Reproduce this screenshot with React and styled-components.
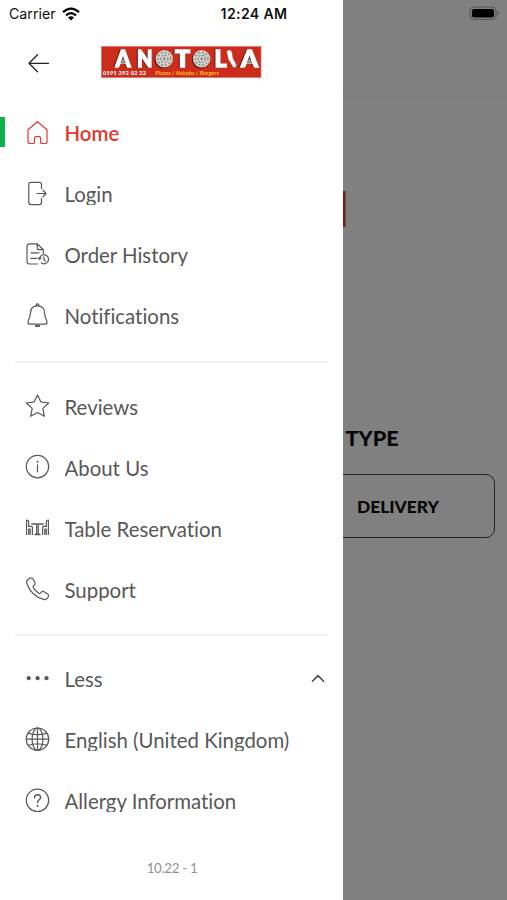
import React from "react";
import styled, { createGlobalStyle } from "styled-components";

const GlobalStyle = createGlobalStyle`
  * { box-sizing: border-box; }
  body { margin: 0; background: #808080; font-family: Lato, "Liberation Sans", sans-serif; }
`;

const Screen = styled.div`
  position: relative;
  display: grid;
  grid-template-columns: 343px 1fr;
  height: 900px;
  overflow: hidden;
`;

const StatusBar = styled.div`
  position: absolute;
  inset: 0 0 auto 0;
  height: 27px;
  display: grid;
  grid-template-columns: 1fr auto 1fr;
  align-items: center;
  padding: 0 8px 0 9px;
  font-family: Inter, sans-serif;
  color: #111;
`;
const Carrier = styled.div`
  display: flex;
  align-items: center;
  gap: 6px;
  font-size: 14.2px;
`;
const Clock = styled.div`
  font-size: 14.1px;
  font-weight: 600;
  letter-spacing: 0.35px;
`;
const Battery = styled.svg`
  justify-self: end;
  margin-right: -1px;
`;

const Drawer = styled.nav`
  display: flex;
  flex-direction: column;
  background: #fff;
`;
const DrawerHeader = styled.header`
  display: flex;
  align-items: flex-start;
  height: 102px;
  padding: 46px 0 0 27px;
`;
const BackIcon = styled.svg`
  margin-top: 6px;
`;
const Logo = styled.svg`
  margin-left: 50px;
`;
const LogoLetters = styled.g`
  font-family: Lato, sans-serif;
  font-weight: 900;
  font-size: 23.5px;
  fill: #fff;
  stroke: #fff;
  stroke-width: 1.5px;
  filter: drop-shadow(-1px 0.8px 0 #56170f);
`;

const Item = styled.a`
  position: relative;
  display: flex;
  align-items: center;
  height: 61px;
  padding: 0 17px 0 25px;
  color: ${(p) => (p.$active ? "#e5382c" : "#585858")};
  &::before {
    content: "";
    display: ${(p) => (p.$active ? "block" : "none")};
    position: absolute;
    left: 0;
    top: 15px;
    width: 4.5px;
    height: 30px;
    background: #0bb14b;
  }
`;
const Icon = styled.svg`
  flex: none;
  width: 25px;
  height: 26px;
  fill: none;
  stroke: currentColor;
  stroke-width: 1.2;
  stroke-linecap: round;
  stroke-linejoin: round;
`;
const Label = styled.span`
  flex: 1;
  height: 21px;
  margin-left: 14.5px;
  margin-top: 2px;
  overflow: hidden;
  font-size: 20.4px;
  line-height: 20px;
  font-weight: ${(p) => (p.$active ? 600 : 400)};
  font-variant-ligatures: none;
  white-space: nowrap;
`;
const Divider = styled.hr`
  flex: none;
  width: 313px;
  height: 2px;
  margin: ${(p) => p.$above} 0 ${(p) => p.$below} 15px;
  border: 0;
  background: #f3f3f3;
`;
const Version = styled.div`
  margin-top: 28px;
  padding-left: 1px;
  text-align: center;
  font-size: 13.3px;
  line-height: 18px;
  letter-spacing: -0.3px;
  color: #929292;
`;

const Page = styled.main`
  display: flex;
  flex-direction: column;
  min-width: 0;
  overflow: hidden;
  background: #808080;
  color: #060606;
`;
const PageHeader = styled.div`
  flex: none;
  height: 97px;
  border-bottom: 4px solid #7d7d7d;
`;
const BannerEdge = styled.div`
  flex: none;
  width: 3px;
  height: 36px;
  margin-top: 94px;
  background: #7b1a10;
  border-right: 1px solid #75534f;
`;
const Heading = styled.h2`
  margin: 197px 0 0 2.5px;
  font-size: 21.6px;
  font-weight: 900;
  line-height: 28px;
`;
const DeliveryButton = styled.button`
  flex: none;
  width: 170px;
  height: 64px;
  margin: 22px 0 0 -18px;
  padding: 1px 0 0 31px;
  border: 1.5px solid #242424;
  border-radius: 9px;
  background: transparent;
  color: inherit;
  font: 900 17.4px/24px Lato, sans-serif;
  text-align: left;
`;

const icons = {
  home: <path d="M3 9.7 12.5 1.7 22 9.7V21.5Q22 23.5 20 23.5H16.6Q15.6 23.5 15.6 22.5V18.5Q15.6 16.7 14 16.7H11.2Q9.5 16.7 9.5 18.5V22.5Q9.5 23.5 8.5 23.5H5Q3 23.5 3 21.5Z" />,
  login: <path d="M16.5 7.5V3.4Q16.5 1.4 14.3 1.4H6Q3.8 1.4 3.8 3.4V21.6Q3.8 23.6 6 23.6H14.3Q16.5 23.6 16.5 21.6V17.5M12 12.5H21M17.8 9.2 21 12.5 17.8 15.8" />,
  history: (
    <>
      <path d="M12.5 22H4.5Q2 22 2 19.5V4.3Q2 1.8 4.5 1.8H12.2L18.3 7.7V11.4M12.2 1.8V5.7Q12.2 7.7 14.2 7.7H18.3M6 10.8H14M6 16.4H11.5" />
      <path d="M14.5 17.3A4.5 4.5 0 1 1 16.2 20.8M14.5 17.3 13.4 16M14.5 17.3 15.9 16.2" />
      <path d="M18.9 14.9V17.5L20.5 19.1" />
    </>
  ),
  bell: (
    <>
      <path d="M12.5 2.9C7.2 2.9 5.4 6.4 5.4 10.5 5.4 14.7 3 16.8 3 19.2Q3 21.2 5.2 21.2H19.8Q22 21.2 22 19.2C22 16.8 19.6 14.7 19.6 10.5 19.6 6.4 17.8 2.9 12.5 2.9ZM11 3Q11 0.8 12.5 0.8T14 3" />
      <path d="M10.8 23H14.2" strokeWidth="2" />
    </>
  ),
  star: <path d="M12.5 2 15.8 8.8 23.7 10 17.8 15.4 19.4 23.3 12.5 19.5 5.6 23.3 7.2 15.4 1.3 10 9.2 8.8Z" />,
  info: (
    <>
      <circle cx="12.5" cy="12.6" r="11.2" />
      <path d="M12.5 10.8V17.8" />
      <path d="M12.5 7.6V7.9" strokeWidth="1.7" />
    </>
  ),
  table: (
    <>
      <path d="M1.6 5V19.5M1.6 5Q3.7 5 3.7 7V11.4H6.6Q7.4 11.4 7.4 12.4V19.5M3.7 14.2H5.2V19.5M3.7 14.2V19.5M23.4 5V19.5M23.4 5Q21.3 5 21.3 7V11.4H18.4Q17.6 11.4 17.6 12.4V19.5M21.3 14.2H19.8V19.5M21.3 14.2V19.5" strokeWidth="1.2" />
      <path d="M7 9H18M10.2 19.3H14.8" strokeWidth="1.7" />
      <path d="M11.7 10V19M13.3 10V19" strokeWidth="1.2" />
    </>
  ),
  phone: <path d="M2.6 3.8 4.6 2.2Q6.6 1 8.1 3.1L9.8 6.2Q10.6 8 9.2 9.2L8.4 9.9Q7.7 10.7 8.3 11.6 10.5 15 13.8 17.3 14.7 18 15.5 17.1L16.3 16.2Q17.4 15 19.1 15.8L22.3 17.7Q24.4 19.1 23.1 21L21.6 22.9Q20.7 23.9 18.7 23.4 6.4 20.3 1.8 7.2 1.1 5.1 2.6 3.8Z" />,
  dots: (
    <g fill="currentColor" stroke="none">
      <circle cx="3.7" cy="12.2" r="2.1" />
      <circle cx="12.6" cy="12.2" r="2.1" />
      <circle cx="21.5" cy="12.2" r="2.1" />
    </g>
  ),
  globe: (
    <>
      <circle cx="12.5" cy="12.2" r="11.2" />
      <ellipse cx="12.5" cy="12.2" rx="5.4" ry="11.2" />
      <path d="M12.5 1V23.4M1.3 12.2H23.7M3.3 6.1Q12.5 9.2 21.7 6.1M3.3 18.3Q12.5 15.2 21.7 18.3" />
    </>
  ),
  help: (
    <>
      <circle cx="12.5" cy="12.3" r="11.2" />
      <path d="M9.5 9.7Q9.5 6.7 12.6 6.7T15.6 9.5C15.6 11.8 12.6 11.8 12.6 14.5" strokeWidth="1.4" />
      <path d="M12.6 17.7V17.9" strokeWidth="1.9" />
    </>
  ),
};

function MenuItem({ icon, children, active, trailing }) {
  return (
    <Item $active={active}>
      <Icon viewBox="0 0 25 26">{icons[icon]}</Icon>
      <Label $active={active}>{children}</Label>
      {trailing}
    </Item>
  );
}

function Pizza({ cx }) {
  return (
    <g>
      <circle cx={cx - 0.8} cy="13.6" r="9" fill="#57190f" />
      <circle cx={cx} cy="12.8" r="8.7" fill="#d5d1ca" />
      <circle cx={cx} cy="12.8" r="6.4" fill="none" stroke="#858585" strokeWidth="1.5" strokeDasharray="1.7 2" />
      <circle cx={cx} cy="12.8" r="3.6" fill="none" stroke="#8b8b88" strokeWidth="1.4" strokeDasharray="2 1.4" />
      <circle cx={cx} cy="12.8" r="1" fill="#555" />
    </g>
  );
}

const letters = [["A", 14.5, 15], ["N", 36, 15.5], ["T", 74, 15], ["L", 113.5, 12], ["A", 140, 17]];

function AnotoliaLogo() {
  return (
    <Logo width="161" height="32" viewBox="0 0 161 32">
      <rect x="0.5" y="0.5" width="159.5" height="31" fill="#cb2c1b" stroke="#dc7467" strokeWidth="0.7" />
      <LogoLetters>
        {letters.map(([ch, x, w], i) => (
          <text key={i} x={x} y="21.2" textLength={w} lengthAdjust="spacingAndGlyphs">{ch}</text>
        ))}
      </LogoLetters>
      <path d="M20 16.8 22 12 24.3 16.8ZM146.2 16.8 148.4 12 150.8 16.8Z" fill="#aaa" stroke="#555" strokeWidth="0.8" />
      <Pizza cx={63.3} />
      <Pizza cx={100.6} />
      <path d="M126 5.5Q129 3.3 130.5 6L131.2 12 134.8 18.5Q135.3 21.5 132.6 21L129.6 15.8Q126.5 12.5 127.2 9Z" fill="#fff" stroke="#fff" strokeWidth="0.9" />
      <text x="2" y="29" fontFamily="Lato, sans-serif" fontWeight="900" fontSize="5.6" textLength="43" fill="#fff">0191 292 02 22</text>
      <text x="54" y="29" fontFamily="Lato, sans-serif" fontWeight="700" fontStyle="italic" fontSize="6.4" textLength="64" fill="#ffb51f">Pizzas / Kebabs / Burgers</text>
    </Logo>
  );
}

export default function App() {
  return (
    <Screen>
      <GlobalStyle />
      <Drawer>
        <DrawerHeader>
          <BackIcon width="24" height="22" viewBox="0 0 24 22" fill="none" stroke="#222" strokeWidth="1.3" strokeLinecap="round" strokeLinejoin="round">
            <path d="M21.5 11.3H2M10.5 2.8 2 11.3 10.5 19.8" />
          </BackIcon>
          <AnotoliaLogo />
        </DrawerHeader>
        <MenuItem icon="home" active>Home</MenuItem>
        <MenuItem icon="login">Login</MenuItem>
        <MenuItem icon="history">Order History</MenuItem>
        <MenuItem icon="bell">Notifications</MenuItem>
        <Divider $above="15px" $below="12.5px" />
        <MenuItem icon="star">Reviews</MenuItem>
        <MenuItem icon="info">About Us</MenuItem>
        <MenuItem icon="table">Table Reservation</MenuItem>
        <MenuItem icon="phone">Support</MenuItem>
        <Divider $above="14.5px" $below="12px" />
        <MenuItem
          icon="dots"
          trailing={
            <svg width="16" height="12" viewBox="0 0 16 12" fill="none" stroke="#444" strokeWidth="1.5" strokeLinecap="round" strokeLinejoin="round">
              <path d="M2.4 8.2 8 2.6 13.6 8.2" />
            </svg>
          }
        >
          Less
        </MenuItem>
        <MenuItem icon="globe">English (United Kingdom)</MenuItem>
        <MenuItem icon="help">Allergy Information</MenuItem>
        <Version>10.22 - 1</Version>
      </Drawer>
      <Page>
        <PageHeader />
        <BannerEdge />
        <Heading>TYPE</Heading>
        <DeliveryButton>DELIVERY</DeliveryButton>
      </Page>
      <StatusBar>
        <Carrier>
          Carrier
          <svg width="18" height="14" viewBox="0 0 18 14" fill="none" stroke="#000" strokeWidth="2.3">
            <path d="M1 5.2Q9-2 17 5.2M4 8.3Q9 3.9 14 8.3" />
            <path d="M6 10.6Q9 8 12 10.6L9 13.5Z" fill="#000" stroke="none" />
          </svg>
        </Carrier>
        <Clock>12:24 AM</Clock>
        <Battery width="31" height="16" viewBox="0 0 31 16">
          <rect x="1" y="1" width="26" height="12.5" rx="4" fill="none" stroke="#555" strokeWidth="1.2" />
          <rect x="3" y="3" width="22" height="8.5" rx="2" fill="#000" />
          <path d="M28.6 5.1Q31.4 7.2 28.6 9.3Z" fill="#555" />
        </Battery>
      </StatusBar>
    </Screen>
  );
}
